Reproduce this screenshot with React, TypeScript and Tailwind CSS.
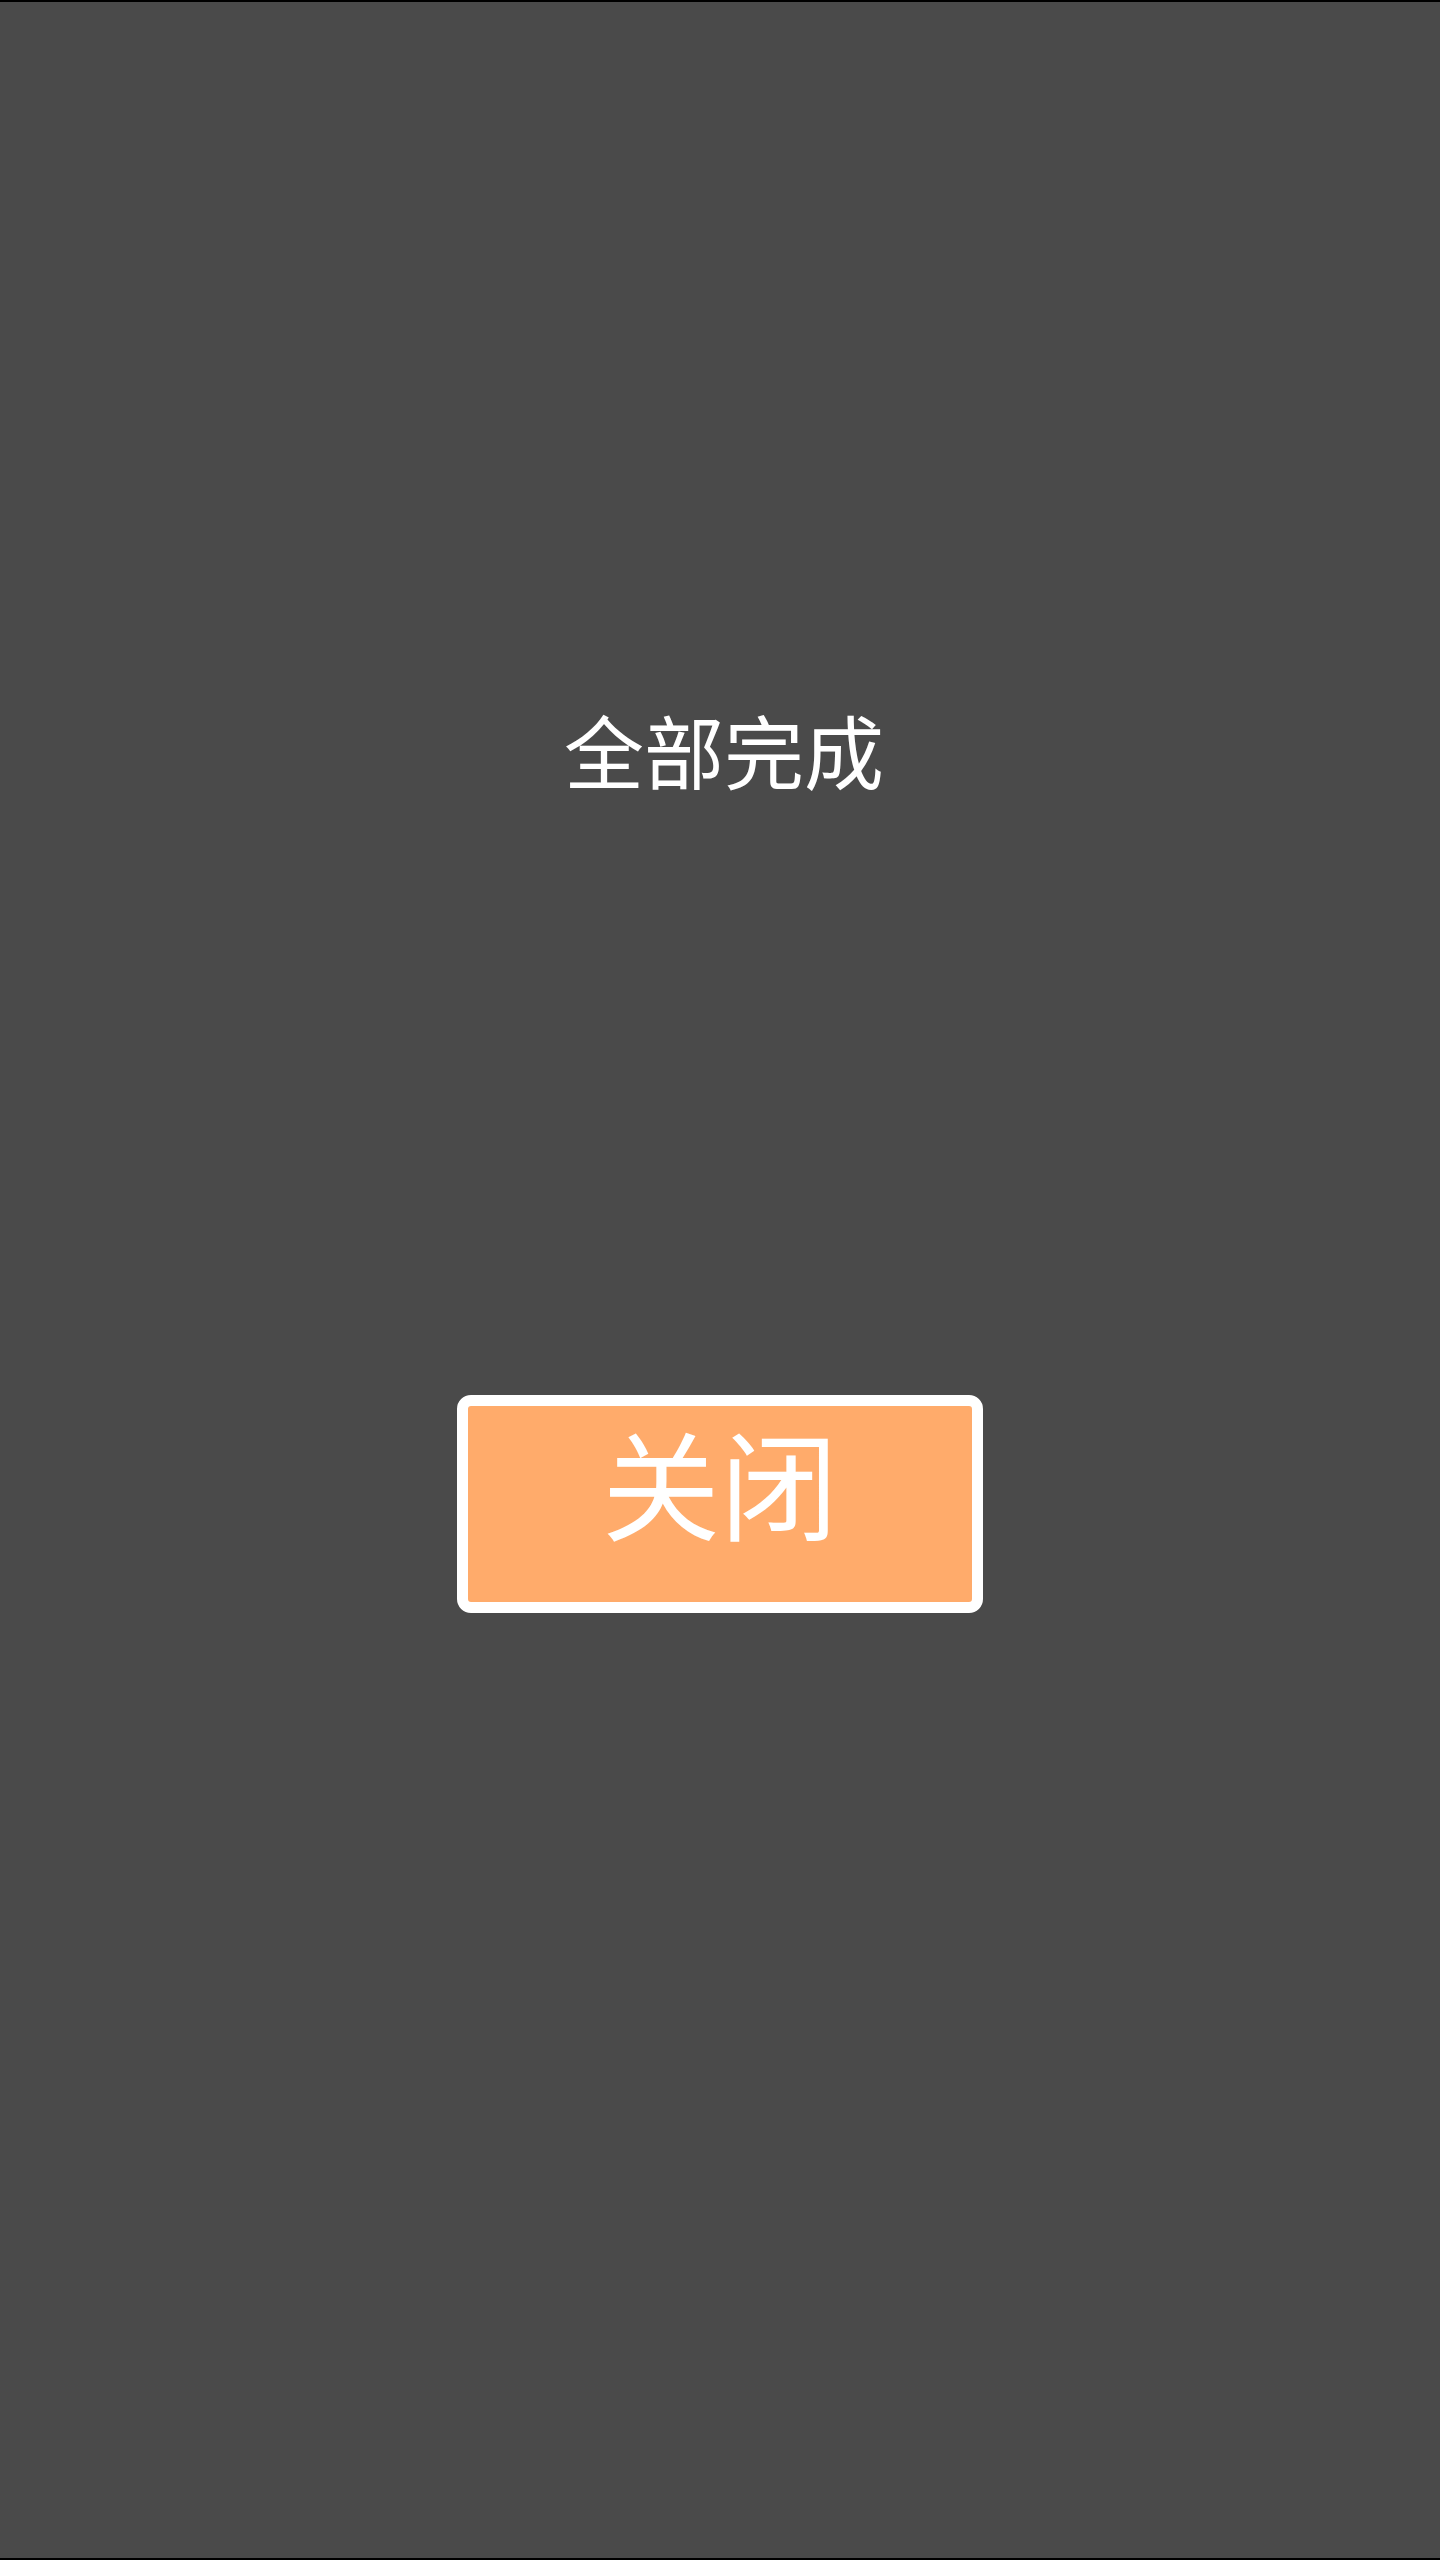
export default function App() {
  return (
    <div
      className="flex h-[2560px] w-full flex-col border-y-2 border-black bg-[#4a4a4a]"
      style={{ fontFamily: '"Noto Sans CJK SC", "Noto Sans", sans-serif' }}
    >
      {/* Title */}
      <h1 className="mt-[706px] pl-2 text-center text-[80px] font-normal leading-[80px] text-white">
        全部完成
      </h1>

      {/* Close button */}
      <button className="ml-[457px] mt-[607px] flex h-[218px] w-[526px] items-start justify-center rounded-[14px] border-[11px] border-white bg-[#ffab6b] pt-[16px] text-[118px] leading-[118px] text-white">
        关闭
      </button>
    </div>
  );
}
